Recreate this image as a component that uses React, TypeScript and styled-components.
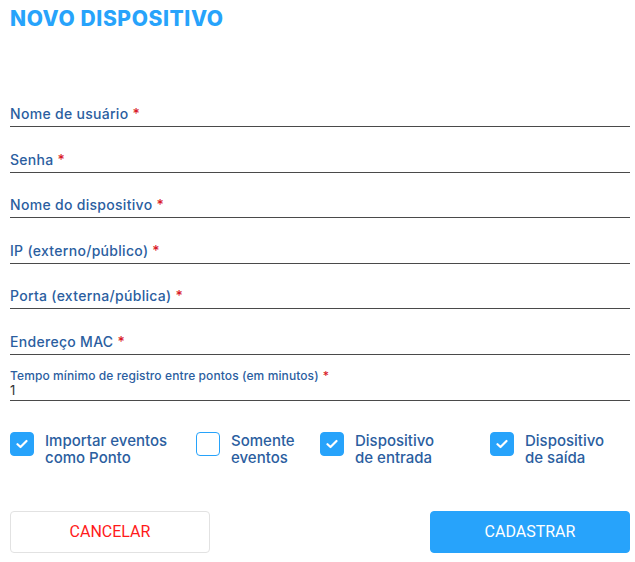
import styled, { createGlobalStyle } from "styled-components";

const GlobalStyle = createGlobalStyle`
    body {
        margin: 0;
        background: #ffffff;
        font-family: Inter, "Noto Sans", sans-serif;
    }
`;

const Page = styled.div`
    width: 635px;
    padding: 5px 5px 0 10px;
    box-sizing: border-box;
`;

const Title = styled.h1`
    margin: 0;
    font-size: 21px;
    line-height: 27px;
    font-weight: 800;
    color: #27a3fb;
    letter-spacing: 0.6px;
`;

const Form = styled.div`
    display: flex;
    flex-direction: column;
    margin-top: 71px;
`;

const Field = styled.div<{ $gap: number; $pad: number }>`
    display: flex;
    flex-direction: column;
    border-bottom: 1.5px solid #4a4a4a;
    padding-bottom: ${(p) => p.$pad}px;
    margin-bottom: ${(p) => p.$gap}px;
`;

const Label = styled.label<{ $small?: boolean }>`
    font-size: ${(p) => (p.$small ? "12px" : "14px")};
    line-height: ${(p) => (p.$small ? "15px" : "22px")};
    font-weight: 500;
    color: #2b5e9f;
    letter-spacing: ${(p) => (p.$small ? "0.1px" : "0.3px")};
`;

const Req = styled.span`
    color: #d91b2a;
    margin-left: 4px;
`;

const Value = styled.div`
    font-size: 13px;
    line-height: 14px;
    color: #333;
`;

const Checks = styled.div`
    display: grid;
    grid-template-columns: 186px 124px 170px 1fr;
    margin-top: 31px;
`;

const CheckItem = styled.div`
    display: flex;
    align-items: flex-start;
    gap: 11px;
`;

const Box = styled.span<{ $checked?: boolean }>`
    width: 24px;
    height: 24px;
    box-sizing: border-box;
    border-radius: 4px;
    flex-shrink: 0;
    display: flex;
    align-items: center;
    justify-content: center;
    background: ${(p) => (p.$checked ? "#27a3fb" : "#fff")};
    border: 1.5px solid #27a3fb;
`;

const CheckText = styled.span`
    font-size: 15px;
    line-height: 17.5px;
    font-weight: 500;
    color: #2b5e9f;
`;

const Buttons = styled.div`
    display: flex;
    justify-content: space-between;
    margin-top: 44px;
`;

const Button = styled.button<{ $primary?: boolean }>`
    width: 200px;
    height: 42px;
    border-radius: 4px;
    font-family: Roboto, "Liberation Sans", sans-serif;
    font-size: 16px;
    text-transform: uppercase;
    cursor: pointer;
    border: 1px solid ${(p) => (p.$primary ? "#27a3fb" : "#e2e2e2")};
    background: ${(p) => (p.$primary ? "#27a3fb" : "#fff")};
    color: ${(p) => (p.$primary ? "#fff" : "#ff1a1a")};
`;

const Check = () => (
    <svg width="12" height="10" viewBox="0 0 12 10">
        <path d="M1.5 5.2 L4.5 8 L10.5 2" fill="none" stroke="#fff" strokeWidth="2.2" strokeLinecap="round" strokeLinejoin="round" />
    </svg>
);

const fields = [
    "Nome de usuário",
    "Senha",
    "Nome do dispositivo",
    "IP (externo/público)",
    "Porta (externa/pública)",
    "Endereço MAC",
];

const options = [
    { text: ["Importar eventos", "como Ponto"], checked: true },
    { text: ["Somente", "eventos"], checked: false },
    { text: ["Dispositivo", "de entrada"], checked: true },
    { text: ["Dispositivo", "de saída"], checked: true },
];

export default function App() {
    return (
        <>
            <GlobalStyle />
            <Page>
                <Title>NOVO DISPOSITIVO</Title>
                <Form>
                    {fields.map((f, i) => (
                        <Field key={f} $pad={1} $gap={i === fields.length - 1 ? 13 : 21.5}>
                            <Label>
                                {f}
                                <Req>*</Req>
                            </Label>
                        </Field>
                    ))}
                    <Field $pad={3} $gap={0}>
                        <Label $small>
                            Tempo mínimo de registro entre pontos (em minutos)
                            <Req>*</Req>
                        </Label>
                        <Value>1</Value>
                    </Field>
                </Form>
                <Checks>
                    {options.map((o) => (
                        <CheckItem key={o.text.join(" ")}>
                            <Box $checked={o.checked}>{o.checked && <Check />}</Box>
                            <CheckText>
                                {o.text[0]}
                                <br />
                                {o.text[1]}
                            </CheckText>
                        </CheckItem>
                    ))}
                </Checks>
                <Buttons>
                    <Button>Cancelar</Button>
                    <Button $primary>Cadastrar</Button>
                </Buttons>
            </Page>
        </>
    );
}
